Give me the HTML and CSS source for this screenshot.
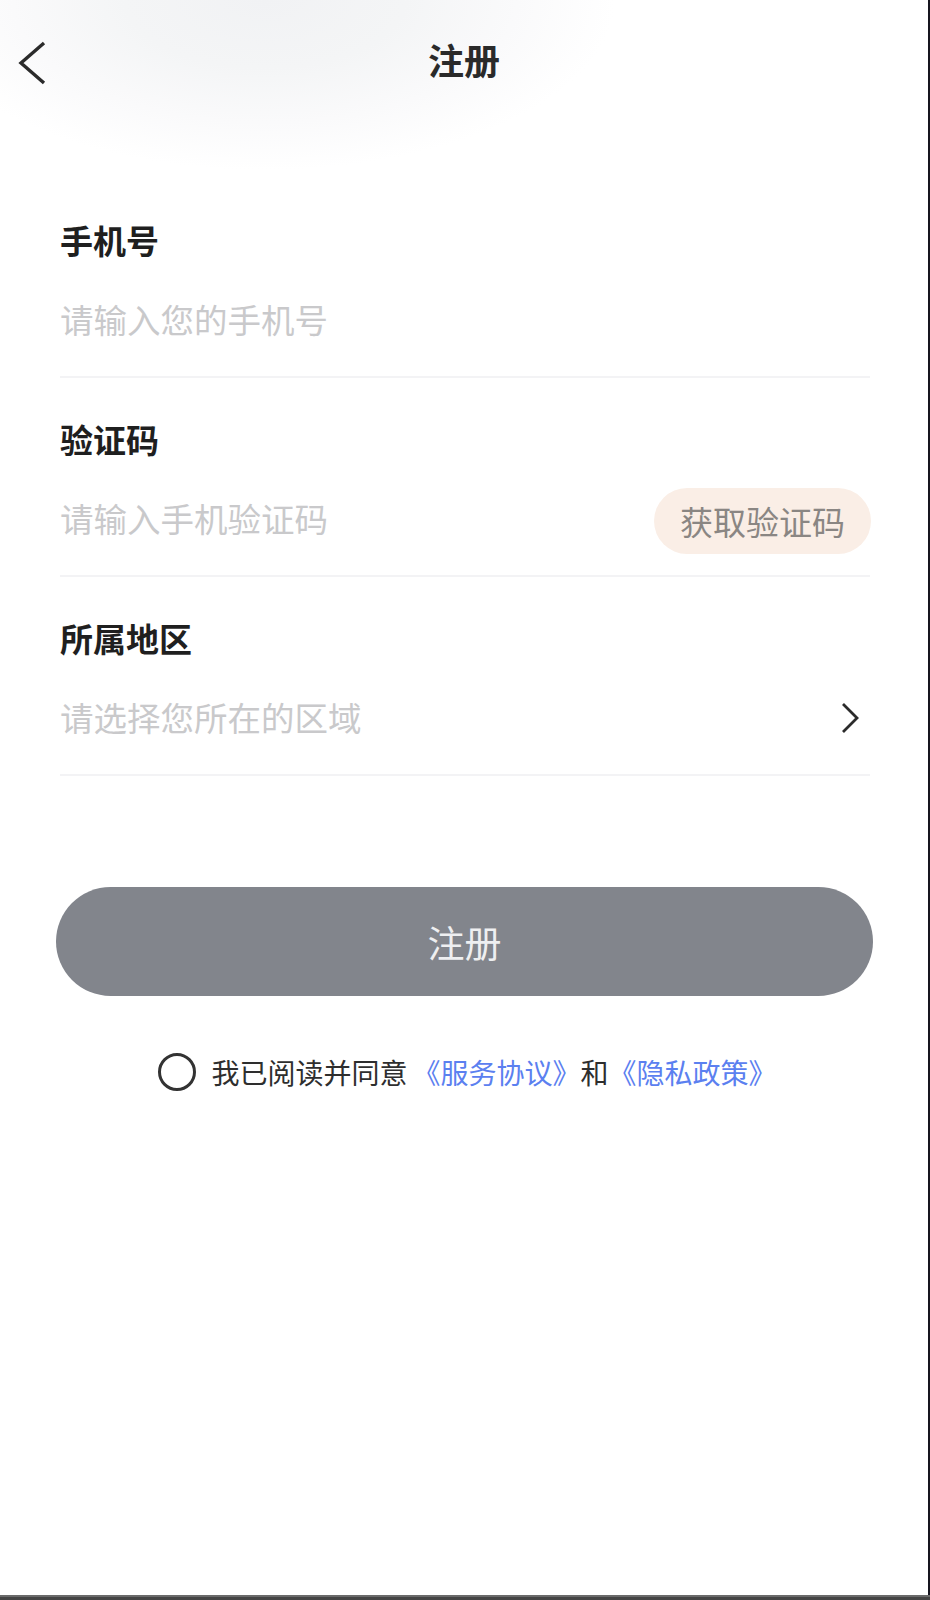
FILE: index.html
```html
<!DOCTYPE html>
<html lang="zh-CN">
<head>
<meta charset="utf-8">
<title>注册</title>
<link rel="stylesheet" href="styles.css">
</head>
<body>
<div class="screen">
  <header class="nav">
    <span class="nav-back">
      <svg width="32" height="48" viewBox="0 0 32 48"><path d="M28 4 L5 24 L28 44" fill="none" stroke="#2b2b2b" stroke-width="3.4"/></svg>
    </span>
    <h1 class="nav-title">注册</h1>
    <span class="nav-side"></span>
  </header>

  <form class="form">
    <div class="field">
      <div class="field-label">手机号</div>
      <div class="field-row">
        <span class="placeholder">请输入您的手机号</span>
      </div>
    </div>
    <div class="field">
      <div class="field-label">验证码</div>
      <div class="field-row">
        <span class="placeholder">请输入手机验证码</span>
        <span class="code-btn">获取验证码</span>
      </div>
    </div>
    <div class="field">
      <div class="field-label">所属地区</div>
      <div class="field-row">
        <span class="placeholder">请选择您所在的区域</span>
        <svg class="row-arrow" width="24" height="36" viewBox="0 0 24 36"><path d="M7 2 L21 16 L7 30" fill="none" stroke="#2b2b2b" stroke-width="2.8"/></svg>
      </div>
    </div>
  </form>

  <div class="actions">
    <div class="submit">注册</div>
    <div class="agree">
      <span class="radio"></span>
      <span class="agree-text">我已阅读并同意<a class="link link-first">《服务协议》</a>和<a class="link">《隐私政策》</a></span>
    </div>
  </div>
</div>
<div class="bottom-bar"></div>
</body>
</html>
```

FILE: styles.css
```css
* { box-sizing: border-box; }
html, body { margin: 0; padding: 0; }
body {
  width: 930px;
  font-family: "Noto Sans CJK SC", "Noto Sans", sans-serif;
  background: #ffffff;
  color: #222;
}
.screen {
  width: 930px;
  height: 1595px;
  border-right: 2px solid #16151f;
  background:
    radial-gradient(ellipse 350px 170px at 265px 0px, #f1f2f4 0%, #f4f5f6 40%, #fafafb 72%, #ffffff 100%) no-repeat;
  display: flex;
  flex-direction: column;
}
.nav {
  height: 126px;
  display: flex;
  align-items: center;
  padding-left: 16px;
}
.nav-back {
  width: 60px;
  display: flex;
  align-items: center;
}
.nav-back svg { display: block; }
.nav-title {
  flex: 1;
  margin: 0 0 8px;
  text-align: center;
  font-size: 36px;
  font-weight: 700;
  color: #2a2a2a;
  line-height: 1;
}
.nav-side { width: 76px; }

.form {
  margin-top: 94px;
  padding: 0 58px 0 60px;
  display: flex;
  flex-direction: column;
  gap: 41px;
}
.field {
  border-bottom: 2px solid #f3f3f5;
  padding-bottom: 25px;
}
.field-label {
  font-size: 33px;
  line-height: 40px;
  font-weight: 700;
  color: #1f1f1f;
}
.field-row {
  margin-top: 25px;
  height: 66px;
  display: flex;
  align-items: center;
  justify-content: space-between;
}
.placeholder {
  font-size: 33.5px;
  color: #c9c9cb;
}
.code-btn {
  height: 66px;
  padding: 0 26px;
  border-radius: 33px;
  background: #faeee6;
  color: #8a8683;
  font-size: 33px;
  display: flex;
  align-items: center;
  margin-right: -1px;
  margin-top: 7px;
}
.row-arrow { display: block; margin-right: 10px; margin-top: 8px; }

.actions {
  padding: 0 55px 0 56px;
  display: flex;
  flex-direction: column;
  align-items: center;
}
.submit {
  margin-top: 111px;
  width: 100%;
  height: 109px;
  border-radius: 55px;
  background: #82858c;
  color: #eeeff1;
  font-size: 37px;
  display: flex;
  align-items: center;
  justify-content: center;
}
.agree {
  margin-top: 56px;
  padding-left: 6px;
  display: flex;
  align-items: center;
  gap: 15px;
}
.radio {
  width: 38px;
  height: 38px;
  border: 3px solid #333;
  border-radius: 50%;
}
.agree-text {
  font-size: 28px;
  color: #2e2e2e;
}
.link { color: #5b80f0; }
.link-first { margin-left: 5px; }

.bottom-bar {
  width: 930px;
  height: 5px;
  background: linear-gradient(#6a6a6a 0 2px, #454545 2px 100%);
}
```
